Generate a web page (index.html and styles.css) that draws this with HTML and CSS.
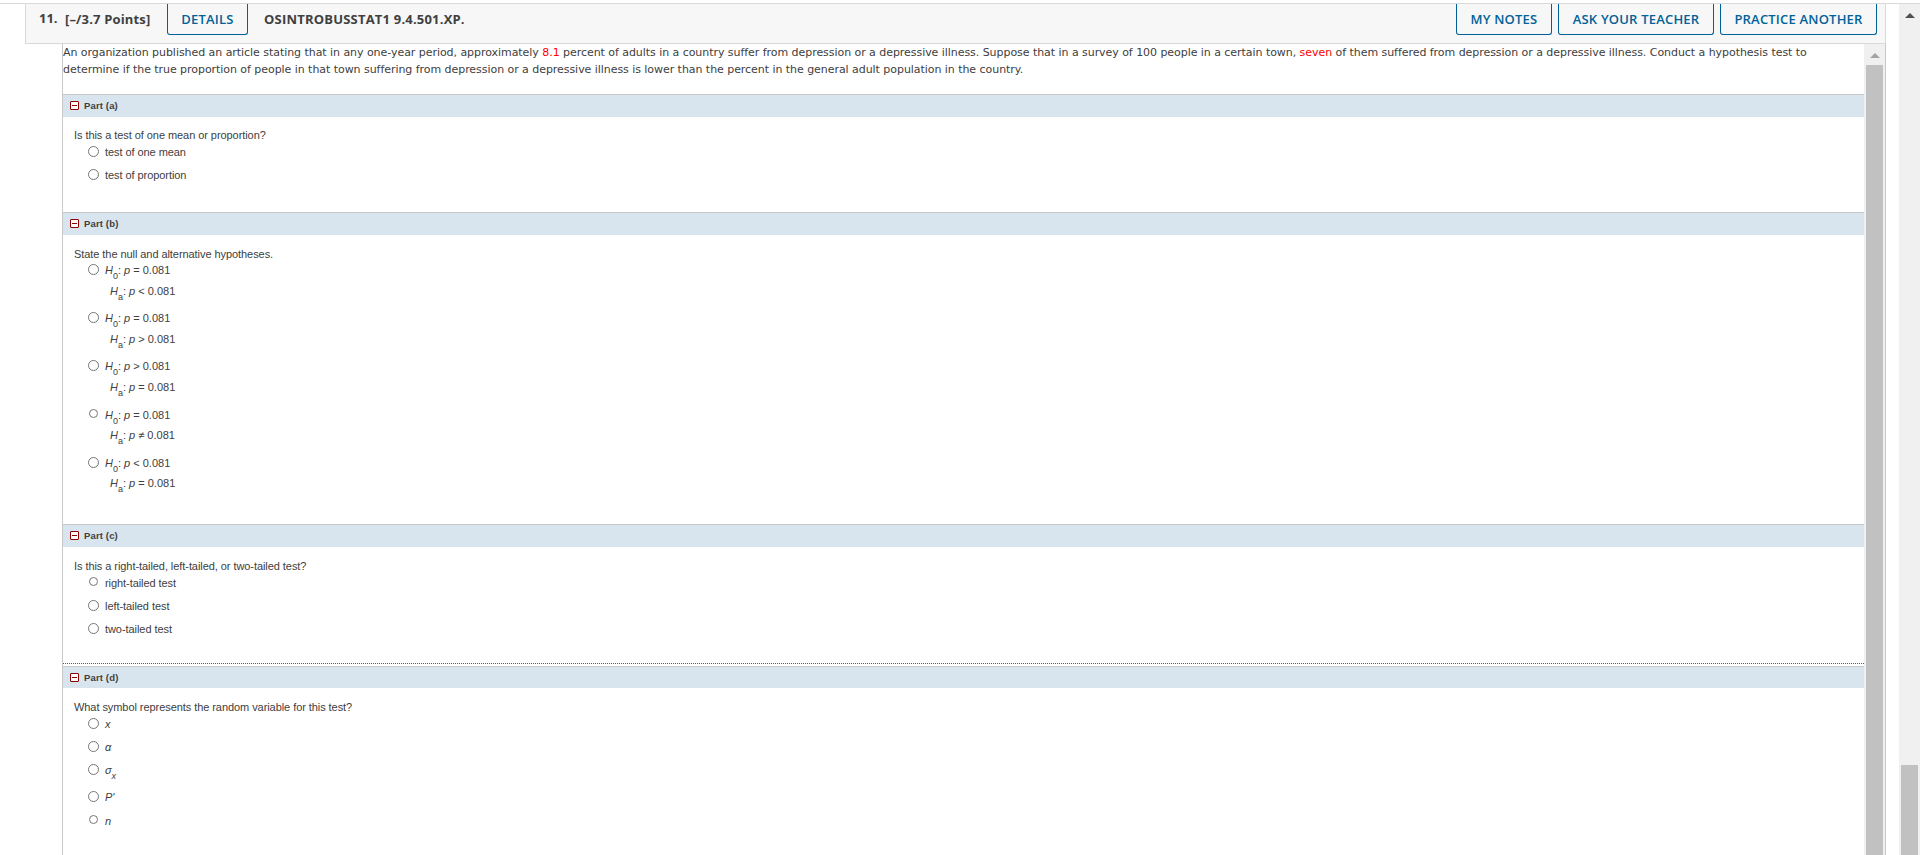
FILE: index.html
```html
<!DOCTYPE html>
<html lang="en">
<head>
    <meta charset="UTF-8">
    <meta name="viewport" content="width=device-width, initial-scale=1.0">
    <title>OSINTROBUSSTAT1 9.4.501.XP.</title>
    <link rel="stylesheet" href="styles.css">
</head>
<body>
    <div class="page">
        <main class="question">
            <header class="question-header">
                <span class="number">11.</span>
                <span class="points">[–/3.7 Points]</span>
                <button class="btn btn-details">DETAILS</button>
                <span class="name">OSINTROBUSSTAT1 9.4.501.XP.</span>
                <div class="actions">
                    <button class="btn btn-notes">MY NOTES</button>
                    <button class="btn btn-ask">ASK YOUR TEACHER</button>
                    <button class="btn btn-practice">PRACTICE ANOTHER</button>
                </div>
            </header>

            <div class="question-body">
                <div class="content">
                    <p class="intro">An organization published an article stating that in any one-year period, approximately <span class="red">8.1</span> percent of adults in a country suffer from depression or a depressive illness. Suppose that in a survey of 100 people in a certain town, <span class="red">seven</span> of them suffered from depression or a depressive illness. Conduct a hypothesis test to<br>determine if the true proportion of people in that town suffering from depression or a depressive illness is lower than the percent in the general adult population in the country.</p>

                    <section class="part part-a">
                        <h2><svg class="toggle" viewBox="0 0 9 9"><rect x="0.5" y="0.5" width="8" height="8" rx="0.5"/><path d="M2 4.5h5"/></svg>Part (a)</h2>
                        <p class="ask">Is this a test of one mean or proportion?</p>
                        <ul>
                            <li><input type="radio" name="a"><label>test of one mean</label></li>
                            <li><input type="radio" name="a"><label>test of proportion</label></li>
                        </ul>
                    </section>

                    <section class="part part-b">
                        <h2><svg class="toggle" viewBox="0 0 9 9"><rect x="0.5" y="0.5" width="8" height="8" rx="0.5"/><path d="M2 4.5h5"/></svg>Part (b)</h2>
                        <p class="ask">State the null and alternative hypotheses.</p>
                        <ul>
                            <li><input type="radio" name="b"><label><i>H</i><sub>0</sub>: <i>p</i> = 0.081<span class="alt"><i>H</i><sub>a</sub>: <i>p</i> &lt; 0.081</span></label></li>
                            <li><input type="radio" name="b"><label><i>H</i><sub>0</sub>: <i>p</i> = 0.081<span class="alt"><i>H</i><sub>a</sub>: <i>p</i> &gt; 0.081</span></label></li>
                            <li class="taller"><input type="radio" name="b"><label><i>H</i><sub>0</sub>: <i>p</i> &gt; 0.081<span class="alt"><i>H</i><sub>a</sub>: <i>p</i> = 0.081</span></label></li>
                            <li class="tight"><input type="radio" class="small" name="b"><label><i>H</i><sub>0</sub>: <i>p</i> = 0.081<span class="alt"><i>H</i><sub>a</sub>: <i>p</i> ≠ 0.081</span></label></li>
                            <li class="tight"><input type="radio" name="b"><label><i>H</i><sub>0</sub>: <i>p</i> &lt; 0.081<span class="alt"><i>H</i><sub>a</sub>: <i>p</i> = 0.081</span></label></li>
                        </ul>
                    </section>

                    <section class="part part-c">
                        <h2><svg class="toggle" viewBox="0 0 9 9"><rect x="0.5" y="0.5" width="8" height="8" rx="0.5"/><path d="M2 4.5h5"/></svg>Part (c)</h2>
                        <p class="ask">Is this a right-tailed, left-tailed, or two-tailed test?</p>
                        <ul>
                            <li><input type="radio" class="small" name="c"><label>right-tailed test</label></li>
                            <li><input type="radio" name="c"><label>left-tailed test</label></li>
                            <li><input type="radio" name="c"><label>two-tailed test</label></li>
                        </ul>
                    </section>

                    <section class="part part-d">
                        <h2><svg class="toggle" viewBox="0 0 9 9"><rect x="0.5" y="0.5" width="8" height="8" rx="0.5"/><path d="M2 4.5h5"/></svg>Part (d)</h2>
                        <p class="ask">What symbol represents the random variable for this test?</p>
                        <ul>
                            <li><input type="radio" name="d"><label><i>x</i></label></li>
                            <li><input type="radio" name="d"><label><i>α</i></label></li>
                            <li class="sigma"><input type="radio" name="d"><label><i>σ</i><sub><i>x</i></sub></label></li>
                            <li class="prime"><input type="radio" name="d"><label><i>P'</i></label></li>
                            <li><input type="radio" class="small" name="d"><label><i>n</i></label></li>
                        </ul>
                    </section>
                </div>
                <div class="scrollbar inner">
                    <span class="arrow"></span>
                    <span class="thumb"></span>
                </div>
            </div>
        </main>
        <div class="scrollbar outer">
            <span class="arrow"></span>
            <span class="thumb"></span>
        </div>
    </div>
</body>
</html>
```
FILE: styles.css
```css
* {
    box-sizing: border-box;
    margin: 0;
    padding: 0;
}

body {
    height: 855px;
    padding-top: 3px;
    overflow: hidden;
    background-color: #fff;
    color: #404040;
    font-family: "Liberation Sans", Arial, sans-serif;
    font-size: 11px;
}

.page {
    display: flex;
    justify-content: space-between;
    height: 852px;
    padding-left: 25px;
    border-top: 1px solid #d9d9d9;
}

.question {
    display: flex;
    flex-direction: column;
    width: 1861px;
}

/* Header */
.question-header {
    display: flex;
    align-items: flex-start;
    height: 40px;
    padding-left: 13px;
    padding-right: 8px;
    background-color: #f7f7f7;
    border: 1px solid #d9d9d9;
    border-top: none;
    font-family: "Open Sans", sans-serif;
    font-size: 13px;
    font-weight: 700;
    line-height: 31px;
    white-space: nowrap;
}

.number {
    width: 26px;
    line-height: 29px;
}

.points {
    width: 102px;
    letter-spacing: 0.15px;
}

.name {
    margin-left: 16px;
    letter-spacing: 0.2px;
}

.actions {
    display: flex;
    gap: 6px;
    margin-left: auto;
}

.btn {
    height: 31px;
    background-color: #f7f7f7;
    border: 1px solid #006298;
    border-top: none;
    border-radius: 0 0 3px 3px;
    color: #006298;
    font-family: "Open Sans", sans-serif;
    font-size: 13px;
    font-weight: 600;
    line-height: 30px;
    letter-spacing: 0.2px;
    white-space: nowrap;
}

.btn-details {
    width: 81px;
}

.btn-notes {
    width: 96px;
}

.btn-ask {
    width: 156px;
}

.btn-practice {
    width: 157px;
}

/* Question body */
.question-body {
    display: flex;
    flex: 1;
    margin-left: 37px;
    border-left: 1px solid #c8c8c8;
    border-right: 1px solid #c8c8c8;
}

.content {
    flex: 1;
    min-width: 0;
}

.intro {
    height: 50px;
    font-family: "DejaVu Sans", Verdana, sans-serif;
    font-size: 11px;
    line-height: 17px;
    letter-spacing: -0.05px;
    white-space: nowrap;
}

.red {
    color: #f00;
}

/* Parts */
.part {
    letter-spacing: -0.065px;
}

.part h2 {
    display: flex;
    align-items: center;
    height: 23px;
    padding: 0 0 1px 7px;
    background-color: #d9e5ee;
    border-top: 1px solid #c8c8c8;
    font-size: 9.5px;
    font-weight: bold;
    letter-spacing: 0.15px;
}

.toggle {
    width: 9px;
    height: 9px;
    margin-right: 5px;
    fill: #fff;
    stroke: #8b0000;
}

.part-a {
    height: 118px;
}

.part-b {
    height: 312px;
}

.part-c {
    height: 140px;
    border-bottom: 1px dotted #0070b8;
}

.part-d {
    padding-top: 2px;
}

.part-d h2 {
    height: 22px;
    padding-bottom: 0;
}

.ask {
    margin: 12px 0 4px 11px;
    line-height: 13px;
}

.part-b .ask {
    margin: 13px 0 3px 11px;
}

.part-c .ask,
.part-d .ask {
    margin-top: 13px;
}

.part ul {
    list-style: none;
    padding-left: 25px;
}

.part li {
    display: flex;
    align-items: flex-start;
    height: 23px;
    line-height: 13px;
}

.part-b li {
    height: 48px;
    letter-spacing: 0;
}

.part-b li.taller {
    height: 49px;
}

.part li.sigma {
    height: 27px;
}

.part li.prime {
    height: 24px;
}

input[type="radio"] {
    appearance: none;
    width: 11px;
    height: 11px;
    margin-right: 6px;
    border: 1px solid #767676;
    border-radius: 50%;
    background-color: #fff;
}

input[type="radio"].small {
    width: 9px;
    height: 9px;
    margin: 0 7px 0 1px;
}

.alt {
    display: block;
    margin: 8px 0 0 5px;
}

.tight .alt {
    margin-top: 7px;
}

sub {
    position: relative;
    top: 5px;
    font-size: 9px;
    line-height: 0;
    vertical-align: baseline;
}

/* Scrollbars */
.scrollbar {
    display: flex;
    flex-direction: column;
    align-items: center;
    width: 21px;
    background-color: #f0f0f0;
}

.arrow {
    border: 5px solid transparent;
    border-top: none;
    border-bottom-color: #a3a3a3;
    margin: 9px 0 7px;
}

.thumb {
    flex: 1;
    width: 17px;
    background-color: #c1c1c1;
}

.outer .arrow {
    margin-bottom: 747px;
    border-bottom-color: #505050;
}
```
